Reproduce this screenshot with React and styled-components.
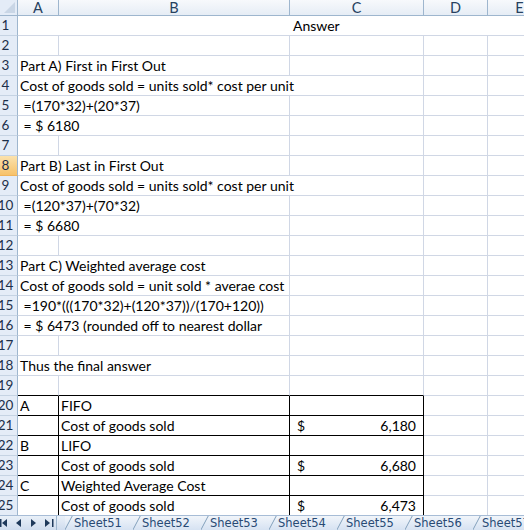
import styled, { createGlobalStyle } from 'styled-components'

const GRID = '#d0d7e5'
const HEAD_LINE = '#9eb6ce'
const INK = '#000'

const GlobalStyle = createGlobalStyle`
  html, body {
    margin: 0;
    padding: 0;
    background: #fff;
    overflow: hidden;
  }
  body {
    font-family: Lato, "Open Sans", sans-serif;
    font-size: 14px;
    color: ${INK};
  }
`

const Window = styled.div`
  width: 524px;
  height: 530px;
  display: flex;
  flex-direction: column;
  overflow: hidden;
`

const Sheet = styled.div`
  flex: 1;
  overflow: hidden;
`

const Row = styled.div`
  display: grid;
  grid-template-columns: 18px 41px 231px 134px 64px 64px;
  height: ${p => p.$h}px;
`

const Corner = styled.div`
  position: relative;
  box-sizing: border-box;
  border-right: 1px solid ${HEAD_LINE};
  border-bottom: 1px solid ${HEAD_LINE};
  background: #e4ecf7;

  &::after {
    content: '';
    position: absolute;
    right: 2px;
    bottom: 2px;
    border-left: 11px solid transparent;
    border-bottom: 11px solid #c9d6e6;
  }
`

const ColHead = styled.div`
  box-sizing: border-box;
  border-right: 1px solid ${HEAD_LINE};
  border-bottom: 1px solid ${HEAD_LINE};
  background: linear-gradient(#f7f9fc, #e6edf5);
  color: #27415f;
  font-size: 14.5px;
  text-align: center;
  line-height: 15px;
`

const RowHead = styled.div`
  box-sizing: border-box;
  display: flex;
  justify-content: center;
  padding-right: 6px;
  overflow: hidden;
  border-right: 1px solid ${HEAD_LINE};
  border-bottom: 1px solid ${p => (p.$selected ? '#f0b45a' : '#c5d3e3')};
  background: ${p => (p.$selected ? 'linear-gradient(#fbe2ad, #f7c26a)' : '#e4ecf7')};
  color: #1c2f4a;
  font-size: 13.5px;
  line-height: 19px;
`

const Cell = styled.div`
  grid-column: span ${p => p.$span || 1};
  box-sizing: border-box;
  min-width: 0;
  border-right: 1px solid ${p => p.$right || GRID};
  border-bottom: 1px solid ${p => p.$bottom || GRID};
  padding: ${p => p.$pad || '0 2px'};
  line-height: 19px;
  white-space: pre;
`

const Amount = styled(Cell)`
  display: flex;
  justify-content: space-between;
  padding: 0 7px;
`

const TabBar = styled.div`
  height: 15px;
  display: flex;
  background: linear-gradient(#e9f0f8, #cfdcee);
  border-top: 1px solid #a7bcd6;
  box-sizing: border-box;
`

const Nav = styled.div`
  width: 56px;
  flex: none;
  display: flex;
  align-items: center;
  border-right: 1px solid #9eb6ce;
`

const Tabs = styled.div`
  display: flex;
  padding-left: 8px;
`

const Tab = styled.div`
  position: relative;
  width: 68px;
  flex: none;
  padding-left: 9px;
  box-sizing: border-box;
  font-family: "DejaVu Sans", sans-serif;
  font-size: 11.5px;
  line-height: 14px;
  color: #284a74;
  overflow: hidden;
  background: linear-gradient(#f1f5fa, #d6e2f2);

  &::before {
    content: '';
    position: absolute;
    left: 3px;
    top: 0;
    bottom: 0;
    border-left: 1px solid #7f9db9;
    transform: skewX(-28deg);
  }
`

const Arrow = ({ dir, bar }) => (
  <svg width="14" height="10" viewBox="0 0 14 10">
    {dir === 'left' ? (
      <>
        {bar && <rect x="0" y="1" width="1.5" height="8" fill="#1e395b" />}
        <path d="M2 5 L7 1 L7 9 Z" fill="#1e395b" />
      </>
    ) : (
      <>
        <path d="M3 1 L8 5 L3 9 Z" fill="#1e395b" />
        {bar && <rect x="10" y="1" width="1.5" height="8" fill="#1e395b" />}
      </>
    )}
  </svg>
)

const B = '#000'

// each row: list of cells in column order, remaining columns filled with blanks
const rows = [
  { n: 2 },
  { n: 3, cells: [{ span: 2, text: 'Part A) First in First Out' }] },
  { n: 4, cells: [{ span: 3, text: 'Cost of goods sold = units sold* cost per unit' }] },
  { n: 5, cells: [{ span: 2, text: ' =(170*32)+(20*37)' }] },
  { n: 6, cells: [{ span: 2, text: ' = $ 6180' }] },
  { n: 7 },
  { n: 8, selected: true, cells: [{ span: 2, text: 'Part B) Last in First Out' }] },
  { n: 9, cells: [{ span: 3, text: 'Cost of goods sold = units sold* cost per unit' }] },
  { n: 10, cells: [{ span: 2, text: ' =(120*37)+(70*32)' }] },
  { n: 11, cells: [{ span: 2, text: ' = $ 6680' }] },
  { n: 12 },
  { n: 13, cells: [{ span: 2, text: 'Part C) Weighted average cost' }] },
  { n: 14, cells: [{ span: 2, text: 'Cost of goods sold = unit sold * averae cost' }] },
  { n: 15, cells: [{ span: 2, text: ' =190*(((170*32)+(120*37))/(170+120))' }] },
  { n: 16, cells: [{ span: 2, text: ' = $ 6473 (rounded off to nearest dollar' }] },
  { n: 17 },
  { n: 18, cells: [{ span: 2, text: 'Thus the final answer' }] },
  { n: 19, cells: [{ bottom: B }, { bottom: B }, { bottom: B }] },
]

const summary = [
  { n: 20, a: 'A', b: 'FIFO' },
  { n: 21, b: 'Cost of goods sold', amount: '6,180' },
  { n: 22, a: 'B', b: 'LIFO' },
  { n: 23, b: 'Cost of goods sold', amount: '6,680' },
  { n: 24, a: 'C', b: 'Weighted Average Cost' },
  { n: 25, b: 'Cost of goods sold', amount: '6,473' },
]

const fill = cells => {
  const used = cells.reduce((s, c) => s + (c.span || 1), 0)
  return [...cells, ...Array.from({ length: 5 - used }, () => ({}))]
}

export default function App() {
  return (
    <Window>
      <GlobalStyle />
      <Sheet>
        <Row $h={16}>
          <Corner />
          {['A', 'B', 'C', 'D', 'E'].map(c => <ColHead key={c}>{c}</ColHead>)}
        </Row>

        <Row $h={20}>
          <RowHead>1</RowHead>
          <Cell $span={5} $pad="0 0 0 275px" $right="transparent">Answer</Cell>
        </Row>

        {rows.map(r => (
          <Row key={r.n} $h={20}>
            <RowHead $selected={r.selected}>{r.n}</RowHead>
            {fill(r.cells || []).map((c, i) => (
              <Cell key={i} $span={c.span} $bottom={c.bottom}>{c.text}</Cell>
            ))}
          </Row>
        ))}

        {summary.map(r => (
          <Row key={r.n} $h={20}>
            <RowHead>{r.n}</RowHead>
            <Cell $right={B} $bottom={B}>{r.a}</Cell>
            <Cell $right={B} $bottom={B}>{r.b}</Cell>
            {r.amount ? (
              <Amount $right={B} $bottom={B}>
                <span>$</span>
                <span>{r.amount}</span>
              </Amount>
            ) : (
              <Cell $right={B} $bottom={B} />
            )}
            <Cell />
            <Cell />
          </Row>
        ))}
      </Sheet>

      <TabBar>
        <Nav>
          <Arrow dir="left" bar />
          <Arrow dir="left" />
          <Arrow dir="right" />
          <Arrow dir="right" bar />
        </Nav>
        <Tabs>
          {[51, 52, 53, 54, 55, 56, 57].map(n => (
            <Tab key={n}>Sheet{n}</Tab>
          ))}
        </Tabs>
      </TabBar>
    </Window>
  )
}
